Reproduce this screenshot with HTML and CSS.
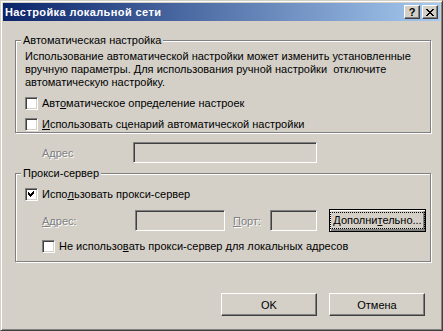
FILE: index.html
```html
<!DOCTYPE html>
<html lang="ru">
<head>
  <meta charset="UTF-8">
  <title>Настройка локальной сети</title>
  <link rel="stylesheet" href="styles.css">
</head>
<body>
  <div class="window">
    <header class="titlebar">
      <span class="title">Настройка локальной сети</span>
      <button class="cap-btn help">?</button>
      <button class="cap-btn close">
        <svg width="8" height="7" viewBox="0 0 8 7" shape-rendering="crispEdges">
          <path d="M0 0h2v1h1v1h2v-1h1v-1h2v1h-1v1h-1v1h-1v1h1v1h1v1h1v1h-2v-1h-1v-1h-2v1h-1v1h-2v-1h1v-1h1v-1h1v-1h-1v-1h-1z" fill="#000"/>
        </svg>
      </button>
    </header>

    <main class="dialog">
      <fieldset class="group auto-group">
        <legend>Автоматическая настройка</legend>
        <div class="group-inner">
          <p class="note">Использование автоматической настройки может изменить установленные вручную параметры. Для использования ручной настройки&nbsp; отключите автоматическую настройку.</p>
          <label class="check-row"><span class="check"></span>Авт<u>о</u>матическое определение настроек</label>
          <label class="check-row"><span class="check"></span><u>И</u>спользовать сценарий автоматической настройки</label>
        </div>
      </fieldset>

      <div class="addr-row">
        <span class="disabled addr-label">Адрес</span>
        <input class="field addr-field" type="text" disabled>
      </div>

      <fieldset class="group proxy-group">
        <legend>Прокси-сервер</legend>
        <div class="group-inner">
          <label class="check-row"><span class="check checked">
            <svg width="7" height="7" viewBox="0 0 7 7" shape-rendering="crispEdges">
              <path d="M6 0v3h-1v1h-1v1h-1v1h-1v-1h-1v-1h-1v-3h1v1h1v1h1v-1h1v-1h1v-1z" fill="#000"/>
            </svg>
          </span>Испо<u>л</u>ьзовать прокси-сервер</label>
          <div class="proxy-row">
            <span class="disabled proxy-label"><u>А</u>дрес:</span>
            <input class="field proxy-field" type="text" disabled>
            <span class="disabled port-label"><u>П</u>орт:</span>
            <input class="field port-field" type="text" disabled>
            <button class="btn default-btn"><span class="focus">Дополни<u>т</u>ельно...</span></button>
          </div>
          <label class="check-row sub-row"><span class="check"></span>Не использо<u>в</u>ать прокси-сервер для локальных адресов</label>
        </div>
      </fieldset>

      <div class="actions">
        <button class="btn">OK</button>
        <button class="btn">Отмена</button>
      </div>
    </main>
  </div>
</body>
</html>
```

FILE: styles.css
```css
/* Base */
body {
  margin: 0;
  font-family: "Liberation Sans", Arial, sans-serif;
  font-size: 11px;
  color: #000;
  background: #d4d0c8;
}

.window {
  width: 443px;
  height: 331px;
  box-sizing: border-box;
  background: #d4d0c8;
  border: 1px solid;
  border-color: #d4d0c8 #404040 #404040 #d4d0c8;
  box-shadow: inset 1px 1px 0 #fff, inset -1px -1px 0 #808080;
  padding: 2px;
  display: flex;
  flex-direction: column;
}

/* Title bar */
.titlebar {
  height: 18px;
  display: flex;
  align-items: center;
  padding: 0 2px;
  background: linear-gradient(to right, #0a246a, #a6caf0);
}

.title {
  flex: 1;
  color: #fff;
  font-weight: bold;
  font-size: 11px;
  letter-spacing: 0.4px;
}

.cap-btn {
  width: 16px;
  height: 14px;
  padding: 0;
  margin: 0;
  display: flex;
  align-items: center;
  justify-content: center;
  background: #d4d0c8;
  border: 1px solid;
  border-color: #fff #404040 #404040 #fff;
  box-shadow: inset -1px -1px 0 #808080;
  font-family: "Liberation Sans", Arial, sans-serif;
  font-size: 11px;
  font-weight: bold;
  line-height: 12px;
  color: #000;
}

.cap-btn.close {
  margin-left: 2px;
}

/* Dialog body */
.dialog {
  padding: 0 9px 0 12px;
}

.group {
  margin: 0;
  padding: 0;
  min-width: 0;
  border: 1px solid #808080;
  box-shadow: inset 1px 1px 0 #fff, 1px 1px 0 #fff;
}

.group legend {
  margin-left: 5px;
  padding: 0 2px;
  line-height: 13px;
  background: #d4d0c8;
}

.group-inner {
  padding-left: 9px;
}

.auto-group {
  margin-top: 13px;
}

.auto-group .group-inner {
  padding-top: 3px;
  padding-bottom: 1px;
}

.note {
  margin: 0 0 8px;
  line-height: 13px;
  padding-right: 6px;
}

.check-row {
  display: flex;
  align-items: center;
  height: 13px;
  line-height: 13px;
  margin-bottom: 8px;
}

.check-row:last-child {
  margin-bottom: 0;
}

.check {
  width: 13px;
  height: 13px;
  box-sizing: border-box;
  margin-right: 4px;
  background: #fff;
  border: 1px solid;
  border-color: #808080 #fff #fff #808080;
  box-shadow: inset 1px 1px 0 #404040, inset -1px -1px 0 #d4d0c8;
  display: flex;
  align-items: center;
  justify-content: center;
  flex-shrink: 0;
}

.disabled {
  color: #808080;
  text-shadow: 1px 1px 0 #fff;
}

.disabled u {
  text-decoration-color: #808080;
}

.field {
  height: 21px;
  box-sizing: border-box;
  margin: 0;
  padding: 0;
  background: #d4d0c8;
  border: 1px solid;
  border-color: #808080 #fff #fff #808080;
  box-shadow: inset 1px 1px 0 #404040, inset -1px -1px 0 #d4d0c8;
  outline: none;
}

/* Address row under auto group */
.addr-row {
  display: flex;
  align-items: center;
  margin-top: 9px;
  padding-left: 27px;
}

.addr-label {
  width: 91px;
}

.addr-field {
  width: 184px;
}

.proxy-group {
  margin-top: 4px;
}

.proxy-group .group-inner {
  padding-top: 8px;
  padding-bottom: 8px;
}

.proxy-row {
  display: flex;
  align-items: center;
  height: 23px;
  margin-bottom: 8px;
  padding-left: 17px;
}

.proxy-label {
  width: 93px;
}

.proxy-field {
  width: 90px;
}

.port-label {
  margin-left: 8px;
  width: 37px;
}

.port-field {
  width: 47px;
}

.sub-row {
  padding-left: 17px;
}

/* Buttons */
.btn {
  width: 96px;
  height: 23px;
  padding: 0;
  margin: 0;
  background: #d4d0c8;
  border: 1px solid;
  border-color: #fff #404040 #404040 #fff;
  box-shadow: inset -1px -1px 0 #808080;
  font-family: "Liberation Sans", Arial, sans-serif;
  font-size: 11px;
  color: #000;
}

.default-btn {
  margin-left: 12px;
  width: 97px;
  border: 1px solid #000;
  box-shadow: inset 1px 1px 0 #fff, inset -2px -2px 0 #808080, inset -1px -1px 0 #404040;
  display: flex;
  align-items: center;
  justify-content: center;
}

.focus {
  padding: 1px 2px;
  outline: 1px dotted #000;
  line-height: 13px;
}

.actions {
  display: flex;
  justify-content: flex-end;
  gap: 12px;
  margin-top: 31px;
  padding-right: 6px;
}
```
